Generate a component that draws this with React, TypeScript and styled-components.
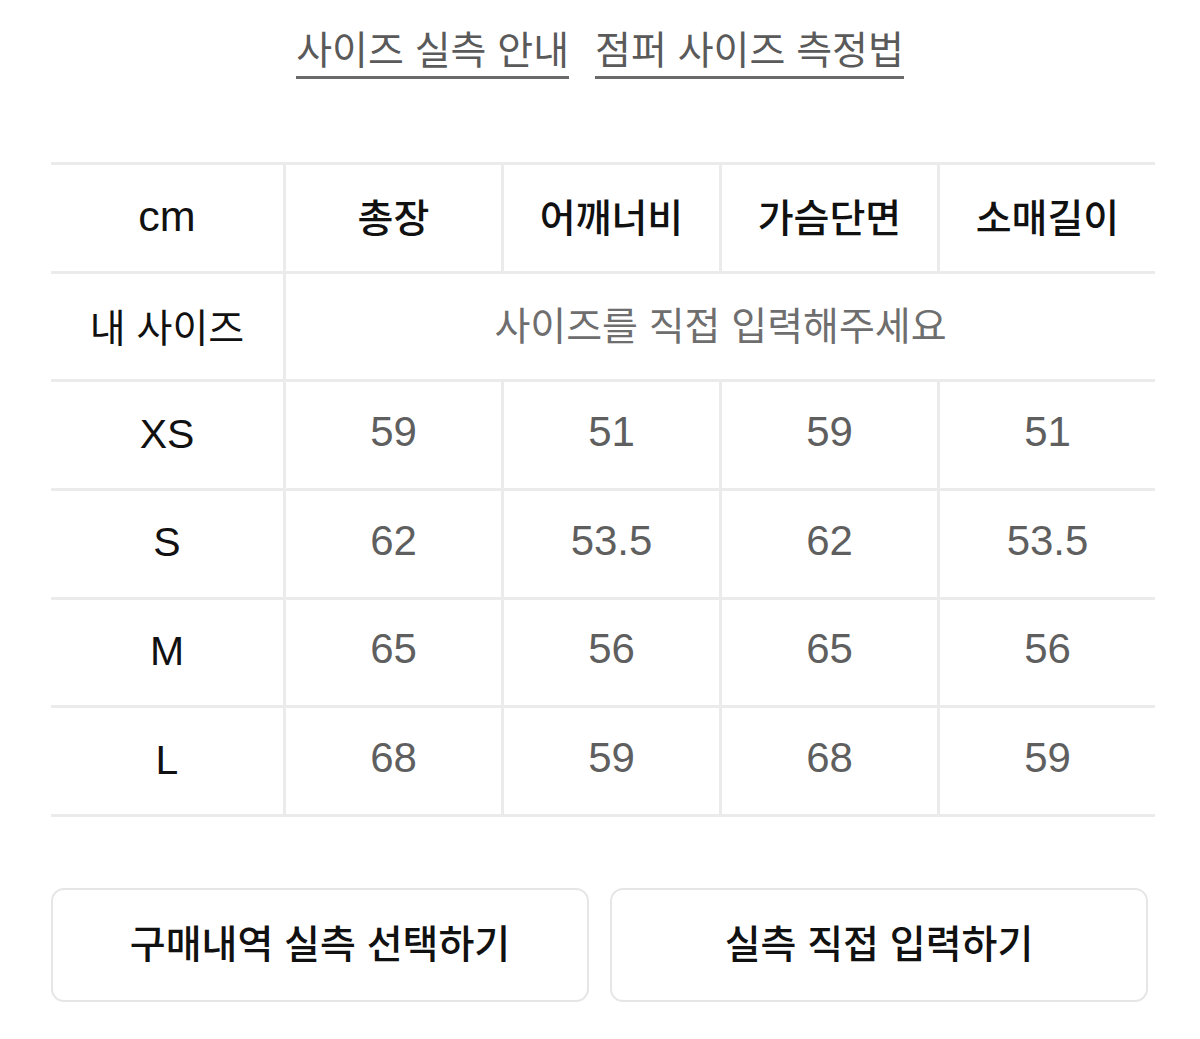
import React from "react";
import styled, { createGlobalStyle } from "styled-components";

const GlobalStyle = createGlobalStyle`
  html, body {
    margin: 0;
    padding: 0;
    background: #ffffff;
  }
  body {
    font-family: "Liberation Sans", "Noto Sans CJK KR", sans-serif;
    color: #111;
  }
`;

const Page = styled.div`
  width: 1200px;
  padding: 28px 0 0 51px;
  box-sizing: border-box;
`;

const LinkBar = styled.div`
  display: flex;
  justify-content: center;
  gap: 26px;
  width: 1098px;
`;

const GuideLink = styled.a`
  display: inline-block;
  font-size: 39px;
  line-height: 46px;
  color: #5a5a5a;
  text-decoration: none;
  padding-bottom: 2px;
  border-bottom: 3px solid #6a6a6a;
  cursor: pointer;
`;

const Table = styled.div`
  margin-top: 83px;
  width: 1104px;
  display: grid;
  grid-template-columns: 232px repeat(4, 215px);
  grid-auto-rows: 105.67px;
  gap: 3px;
  padding: 3px 0;
  background: #ebebeb;
`;

type Tone = "head" | "label" | "value" | "hint";

const Cell = styled.div<{ $tone: Tone; $span?: number }>`
  background: #ffffff;
  display: flex;
  align-items: center;
  justify-content: center;
  box-sizing: border-box;
  padding-bottom: ${(p) => (p.$tone === "label" ? "2px" : "6px")};
  grid-column: ${(p) => (p.$span ? `span ${p.$span}` : "auto")};
  font-size: ${(p) => (p.$tone === "value" ? "42px" : "39px")};
  font-weight: ${(p) => (p.$tone === "head" ? 500 : 400)};
  color: ${(p) => (p.$tone === "value" ? "#5f5f5f" : p.$tone === "hint" ? "#6e6e6e" : "#111111")};
  white-space: nowrap;
`;

const LabelText = styled.span<{ $latin?: boolean }>`
  font-size: ${(p) => (p.$latin ? "41px" : "39px")};
`;

const UnitText = styled.span`
  font-size: 43px;
`;

const ButtonRow = styled.div`
  margin-top: 71px;
  width: 1097px;
  display: grid;
  grid-template-columns: 1fr 1fr;
  gap: 21px;
`;

const ActionButton = styled.button`
  height: 114px;
  border: 2px solid #e6e6e6;
  border-radius: 13px;
  background: #ffffff;
  font-family: "Liberation Sans", "Noto Sans CJK KR", sans-serif;
  font-size: 39px;
  font-weight: 500;
  color: #111111;
  cursor: pointer;
  padding: 0 0 7px;
`;

const headers = ["총장", "어깨너비", "가슴단면", "소매길이"];
const rows: { size: string; values: string[] }[] = [
  { size: "XS", values: ["59", "51", "59", "51"] },
  { size: "S", values: ["62", "53.5", "62", "53.5"] },
  { size: "M", values: ["65", "56", "65", "56"] },
  { size: "L", values: ["68", "59", "68", "59"] },
];

export default function App() {
  return (
    <>
      <GlobalStyle />
      <Page>
        <LinkBar>
          <GuideLink>사이즈 실측 안내</GuideLink>
          <GuideLink>점퍼 사이즈 측정법</GuideLink>
        </LinkBar>
        <Table>
          <Cell $tone="label">
            <UnitText>cm</UnitText>
          </Cell>
          {headers.map((h) => (
            <Cell key={h} $tone="head">
              {h}
            </Cell>
          ))}
          <Cell $tone="label">
            <LabelText>내 사이즈</LabelText>
          </Cell>
          <Cell $tone="hint" $span={4}>
            사이즈를 직접 입력해주세요
          </Cell>
          {rows.map((r) => (
            <React.Fragment key={r.size}>
              <Cell $tone="label">
                <LabelText $latin>{r.size}</LabelText>
              </Cell>
              {r.values.map((v, i) => (
                <Cell key={i} $tone="value">
                  {v}
                </Cell>
              ))}
            </React.Fragment>
          ))}
        </Table>
        <ButtonRow>
          <ActionButton>구매내역 실측 선택하기</ActionButton>
          <ActionButton>실측 직접 입력하기</ActionButton>
        </ButtonRow>
      </Page>
    </>
  );
}
